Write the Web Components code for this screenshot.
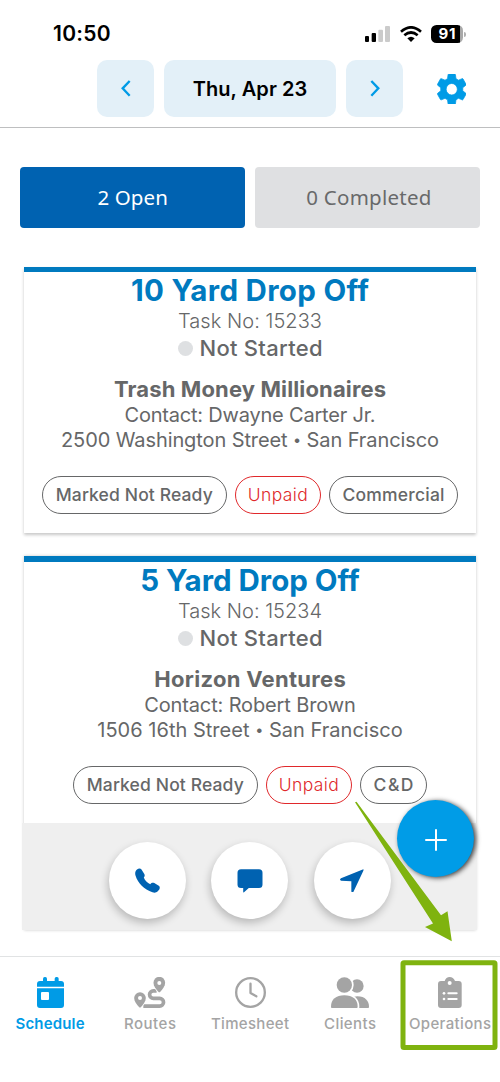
<!DOCTYPE html>
<html lang="en">
<head>
<meta charset="utf-8">
<title>Schedule</title>
<style>
body{margin:0;background:#fff;font-family:Inter,"Liberation Sans",sans-serif;color:#666768;font-optical-sizing:none}
</style>
</head>
<body>
<schedule-app></schedule-app>
<script>
const define=(name,html,after)=>{
  const t=document.createElement('template');t.innerHTML=html;
  customElements.define(name,class extends HTMLElement{
    constructor(){super();this.attachShadow({mode:'open'}).append(t.content.cloneNode(true));}
    connectedCallback(){if(after)after(this,this.shadowRoot);}
  });
};

// One line of text, tracked so that it fills the given measure.
define('text-line',`<style>:host{display:block;white-space:nowrap;text-align:center}span{display:inline-block}::slotted(b){font-size:.72em;font-weight:inherit;display:inline-block;line-height:1;vertical-align:.12em}</style><span><slot></slot></span>`,
 (el,r)=>{
  const s=r.querySelector('span'),n=el.textContent.length,m=+el.getAttribute('measure');
  if(!m)return;
  const ls=(m-s.getBoundingClientRect().width)/(n-1);
  s.style.letterSpacing=ls+'px';s.style.marginRight=-ls+'px';
 });

const icons={
 prev:['0 0 30 50','M26 3 L5 25 L26 47',10,16.7,'stroke'],
 next:['0 0 30 50','M4 3 L25 25 L4 47',10,16.7,'stroke'],
 gear:['2 2 20 20','<path fill-rule="evenodd" stroke="currentColor" stroke-width=".5" stroke-linejoin="round" d="M19.43 12.98c.04-.32.07-.64.07-.98s-.03-.66-.07-.98l2.11-1.65c.19-.15.24-.42.12-.64l-2-3.46c-.12-.22-.39-.3-.61-.22l-2.49 1c-.52-.4-1.08-.73-1.69-.98l-.38-2.65C14.46 2.18 14.25 2 14 2h-4c-.25 0-.46.18-.49.42l-.38 2.65c-.61.25-1.17.59-1.69.98l-2.49-1c-.23-.09-.49 0-.61.22l-2 3.46c-.13.22-.07.49.12.64l2.11 1.65c-.04.32-.07.65-.07.98s.03.66.07.98l-2.11 1.65c-.19.15-.24.42-.12.64l2 3.46c.12.22.39.3.61.22l2.49-1c.52.4 1.08.73 1.69.98l.38 2.65c.03.24.24.42.49.42h4c.25 0 .46-.18.49-.42l.38-2.65c.61-.25 1.17-.59 1.69-.98l2.49 1c.23.09.49 0 .61-.22l2-3.46c.12-.22.07-.49-.12-.64zM12 15.8a3.8 3.8 0 1 1 0-7.6 3.8 3.8 0 0 1 0 7.6z"/>',29.5,30.5],
 signal:['348 75 75 48','<rect x="348" y="105" width="12" height="18" rx="3"/><rect x="368" y="96" width="13" height="27" rx="3"/><g fill="#cbcbcb"><rect x="388" y="86" width="14" height="37" rx="3"/><rect x="408" y="75" width="15" height="48" rx="3"/></g>',25,16],
 wifi:['450 75 66 48','<g fill="none" stroke="currentColor" stroke-width="8"><path d="M453 92 Q483 66 513 92"/><path d="M463 103 Q483 86 503 103"/></g><path d="M472 112 Q483 103 494 112 L483 123Z"/>',22,16],
 phone:['0 0 25 25','<path d="M2 1.5C3.5 .2 5.5 0 6.5 1.5L9.3 6C10 7.5 9.8 8.5 8.8 9.5C10 12.5 12.3 15 15.3 16.2C16.5 14.5 18 14.3 19.3 15.1L23.8 17.8C25 18.7 25 20 24.3 21.4L22.5 23.6C21 25 19 24.8 17.5 24.3C9 21.5 3 15.5 .5 7.5C-.2 5 .3 3 2 1.5Z"/>',25,25],
 chat:['0 0 26 24','<path d="M4 .3H22a3.5 3.5 0 0 1 3.5 3.5V15.5a3.5 3.5 0 0 1-3.500 3.500H11.800L7 23.200Q6.200 23.800 6.200 22.800V19H4A3.500 3.500 0 0 1 .5 15.500V3.800A3.500 3.500 0 0 1 4 .3Z"/>',26,24],
 locate:['273 357 71 71','<path d="M343 358 Q344 359 343 362 L313 426 Q308 430 307 424 L307 394 L276 392 Q270 389 276 385Z"/>',23.7,23.7],
 plus:['0 0 22 22','<path fill="none" stroke="currentColor" stroke-width="2" stroke-linecap="round" d="M11 1V21M1 11H21"/>',22,22],
 schedule:['108 96 81 93','<rect x="126" y="96" width="12" height="20" rx="5"/><rect x="161" y="96" width="12" height="20" rx="5"/><path d="M108 125V117a9 9 0 0 1 9-9H180a9 9 0 0 1 9 9V125Z"/><path fill-rule="evenodd" d="M108 130H189V180a9 9 0 0 1-9 9H117a9 9 0 0 1-9-9ZM123 141a3 3 0 0 0-3 3V162a3 3 0 0 0 3 3H141a3 3 0 0 0 3-3V144a3 3 0 0 0-3-3Z"/>',27,31],
 routes:['403 96 94 93','<path fill="none" stroke="currentColor" stroke-width="11" d="M471 137.500H461a11.200 11.200 0 0 0 0 22.500H480a11.700 11.700 0 0 1 0 23.400H431"/><path stroke="#fff" stroke-width="5" paint-order="stroke" d="M461.500 113a17.500 17.500 0 0 1 35 0C496.500 123 489 132 482 140Q479 143 476 140C469 132 461.500 123 461.500 113Z"/><path stroke="#fff" stroke-width="5" paint-order="stroke" d="M403.500 159a17.500 17.500 0 0 1 35 0C438.500 169 431 178 424 186Q421 189 418 186C411 178 403.500 169 403.500 159Z"/><circle cx="479" cy="114" r="6" fill="#fff"/><circle cx="421" cy="159" r="6" fill="#fff"/>',31.3,31],
 clock:['0 0 93 93','<g fill="none" stroke="currentColor" stroke-width="7" stroke-linecap="round" stroke-linejoin="round"><circle cx="46.500" cy="46.500" r="43"/><path d="M46.500 20V48L64 58"/></g>',31,31],
 clients:['243 95 114 94','<circle cx="321" cy="122" r="20"/><path d="M300 189V172Q300 153 322 153C346 153 357 168 357 184Q357 189 352 189Z"/><g stroke="#fff" stroke-width="10" paint-order="stroke"><circle cx="283" cy="119" r="23"/><path d="M243 184C243 162 258 150 283 150S323 162 323 184Q323 189 318 189H248Q243 189 243 184Z"/></g>',38,31.3],
 operations:['565 96 71 93','<path d="M574 108H585Q589 96 600 96T616 108H627a9 9 0 0 1 9 9V180a9 9 0 0 1-9 9H574a9 9 0 0 1-9-9V117a9 9 0 0 1 9-9Z"/><g fill="#fff"><circle cx="600" cy="114" r="6"/><circle cx="583" cy="145" r="4"/><circle cx="583" cy="162" r="4"/><rect x="593" y="142" width="31" height="6" rx="3"/><rect x="593" y="159" width="31" height="6" rx="3"/></g>',23.7,31],
};
define('ui-icon',`<style>:host{display:block;flex:none}svg{display:block;fill:currentColor}</style><div></div>`,(el,r)=>{
 const [vb,p,w,h,k]=icons[el.getAttribute('name')];
 r.querySelector('div').innerHTML=`<svg viewBox="${vb}" width="${w}" height="${h}" preserveAspectRatio="none">${k?`<path d="${p}" fill="none" stroke="currentColor" stroke-width="7"/>`:p}</svg>`;
});

define('status-bar',`<style>
:host{display:flex;height:60px;box-sizing:border-box;padding:19px 34px 11px 53px;color:#000;align-items:center}
text-line{font-size:21px;line-height:30px;font-weight:600}
.r{margin-left:auto;display:flex;align-items:center;gap:9.5px}
.bat{display:flex;align-items:center;gap:1px}
.cell{width:32px;height:18px;border-radius:5.500px;background:linear-gradient(90deg,#000 29px,#a9a9a9 29px);color:#fff}
.nub{width:2px;height:5px;border-radius:0 2px 2px 0;background:#b0b0b0}
.cell text-line{font-size:15px;line-height:18px;font-weight:700}
</style><text-line measure="57.500">10:50</text-line><div class="r"><ui-icon name="signal"></ui-icon><ui-icon name="wifi"></ui-icon><div class="bat"><div class="cell"><text-line measure="17">91</text-line></div><div class="nub"></div></div></div>`);

define('date-bar',`<style>
:host{display:flex;height:68px;box-sizing:border-box;padding:0 34px 0 97px;border-bottom:1px solid #bebfc0;color:#009be6}
.b{background:#e3f0f8;border-radius:10px;height:57px;width:57px;display:flex;align-items:center;justify-content:center;margin-right:10px}
.d{width:172px;color:#000;font-size:20px;font-weight:600}
.g{margin-left:auto;margin-top:13.500px}
</style><div class="b"><ui-icon name="prev"></ui-icon></div><div class="b d"><text-line measure="114.500">Thu, Apr 23</text-line></div><div class="b"><ui-icon name="next"></ui-icon></div><ui-icon class="g" name="gear"></ui-icon>`);

define('filter-tabs',`<style>
:host{display:flex;gap:10px;margin:39px 20.300px 0;font:20.500px/60px "Noto Sans",sans-serif}
div{flex:1;height:61px;border-radius:4px;background:#dfe0e2;color:#68696a}
.on{background:#0062b1;color:#fff}
div+div text-line{padding-left:3px}
</style><div class="on"><text-line measure="70.500">2 Open</text-line></div><div><text-line measure="125">0 Completed</text-line></div>`);

define('tag-chip',`<style>
:host{display:block;box-sizing:border-box;height:38px;border:1px solid #666768;border-radius:19px;font-size:17.500px;line-height:36px;font-weight:500;flex:none}
:host([alert]){border-color:#e0282b;color:#e0282b;font-weight:300}
</style><slot></slot>`);

define('task-card',`<style>
:host{display:block;margin:0 24px;background:#fff;border-top:5px solid #007abf;box-shadow:0 2px 3px rgba(0,0,0,.22)}
.t{color:#007abf;font-size:29.500px;line-height:37px;font-weight:700}
.n{font-size:20px;line-height:24px;font-weight:300;display:block}
.s{display:flex;justify-content:center;align-items:center;gap:6px;font-size:22px;line-height:29px;height:30px;font-weight:500}
.s i{width:15px;height:15px;margin-left:1px;border-radius:50%;background:#dee0e2}
.c{font-size:22px;line-height:25px;font-weight:700;margin-top:14px;display:block}
.p{font-size:20px;line-height:26px;display:block}
.a{font-size:20px;line-height:25px;display:block}
.chips{display:flex;justify-content:center;gap:8px;margin-top:23px;padding-bottom:19px}
</style>
<div class="t"><slot name="title"></slot></div><slot class="n" name="number"></slot>
<div class="s"><i></i><slot name="status"></slot></div>
<slot class="c" name="client"></slot><slot class="p" name="contact"></slot><slot class="a" name="address"></slot>
<div class="chips"><slot name="chips"></slot></div><slot></slot>`);

define('action-row',`<style>
:host{display:flex;justify-content:center;gap:25.500px;box-sizing:border-box;height:107px;margin:0 -1px 0 -2px;padding:19px 0 0 0;background:#efefef}
div{width:77px;height:77px;border-radius:50%;background:#fff;box-shadow:-1px 4px 8px rgba(0,0,0,.23);display:flex;align-items:center;justify-content:center;color:#0062b1}
</style><div><ui-icon name="phone"></ui-icon></div><div><ui-icon name="chat"></ui-icon></div><div><ui-icon name="locate"></ui-icon></div>`);

define('tab-bar',`<style>
:host{display:flex;height:126px;box-sizing:border-box;margin-top:26px;border-top:1px solid #e1e3e4;color:#a4a4a4;font-size:15px;line-height:22px;font-weight:500}
div{flex:1;display:flex;flex-direction:column;align-items:center;padding-top:20px;gap:5px}
.on{color:#009be6;font-weight:600}ui-icon{height:31px}
</style>
<div class="on"><ui-icon name="schedule"></ui-icon><text-line measure="69">Schedule</text-line></div>
<div><ui-icon name="routes"></ui-icon><text-line measure="52">Routes</text-line></div>
<div><ui-icon name="clock"></ui-icon><text-line measure="78">Timesheet</text-line></div>
<div><ui-icon name="clients"></ui-icon><text-line measure="52">Clients</text-line></div>
<div><ui-icon name="operations"></ui-icon><text-line measure="82">Operations</text-line></div>`);

define('add-button',`<style>
:host{position:absolute;left:397.300px;top:799.700px;width:77px;height:77px;border-radius:50%;background:#009ce7;box-shadow:2px 1px 5px rgba(0,0,0,.75);color:#fff;display:flex;align-items:center;justify-content:center}
ui-icon{margin:4px 0 0 1px}
</style><ui-icon name="plus"></ui-icon>`);

define('callout-marks',`<style>
:host{position:absolute;inset:0;pointer-events:none;overflow:hidden}
svg{position:absolute;inset:0;display:block}
</style><svg width="500" height="1082"><path fill="#7fb30f" d="M355 802.300L356.500 801.800L441 915.300L447.500 911.300L451.800 941.200L425 927L433 923.500Z"/><rect x="403" y="962.700" width="92" height="84.800" rx="1" fill="none" stroke="#7fb30f" stroke-width="5"/></svg>`);

define('schedule-app',`<style>
:host{display:block;position:relative;width:500px;height:1082px;overflow:hidden;background:#fff}
.one{margin-top:39px}.two{margin-top:23px;border-top-width:6px;box-shadow:0 0 3px rgba(0,0,0,.22)}
.w1{width:184.500px}.w2{width:86.500px}.w3{width:129px}.w4{width:67px}
</style>
<status-bar></status-bar><date-bar></date-bar><filter-tabs></filter-tabs>
<task-card class="one">
<text-line slot="title" measure="238">10 Yard Drop Off</text-line>
<text-line slot="number" measure="144">Task No: 15233</text-line>
<text-line slot="status" measure="123">Not Started</text-line>
<text-line slot="client" measure="272">Trash Money Millionaires</text-line>
<text-line slot="contact" measure="251">Contact: Dwayne Carter Jr.</text-line>
<text-line slot="address" measure="378">2500 Washington Street <b>•</b> San Francisco</text-line>
<tag-chip slot="chips" class="w1"><text-line measure="157">Marked Not Ready</text-line></tag-chip>
<tag-chip slot="chips" class="w2" alert><text-line measure="60">Unpaid</text-line></tag-chip>
<tag-chip slot="chips" class="w3"><text-line measure="102">Commercial</text-line></tag-chip>
</task-card>
<task-card class="two">
<text-line slot="title" measure="219.500">5 Yard Drop Off</text-line>
<text-line slot="number" measure="144">Task No: 15234</text-line>
<text-line slot="status" measure="123">Not Started</text-line>
<text-line slot="client" measure="191.500">Horizon Ventures</text-line>
<text-line slot="contact" measure="211.500">Contact: Robert Brown</text-line>
<text-line slot="address" measure="305.500">1506 16th Street <b>•</b> San Francisco</text-line>
<tag-chip slot="chips" class="w1"><text-line measure="157">Marked Not Ready</text-line></tag-chip>
<tag-chip slot="chips" class="w2" alert><text-line measure="60">Unpaid</text-line></tag-chip>
<tag-chip slot="chips" class="w4"><text-line measure="40">C&amp;D</text-line></tag-chip>
<action-row></action-row>
</task-card>
<tab-bar></tab-bar>
<add-button></add-button>
<callout-marks></callout-marks>`);
</script>
</body>
</html>
